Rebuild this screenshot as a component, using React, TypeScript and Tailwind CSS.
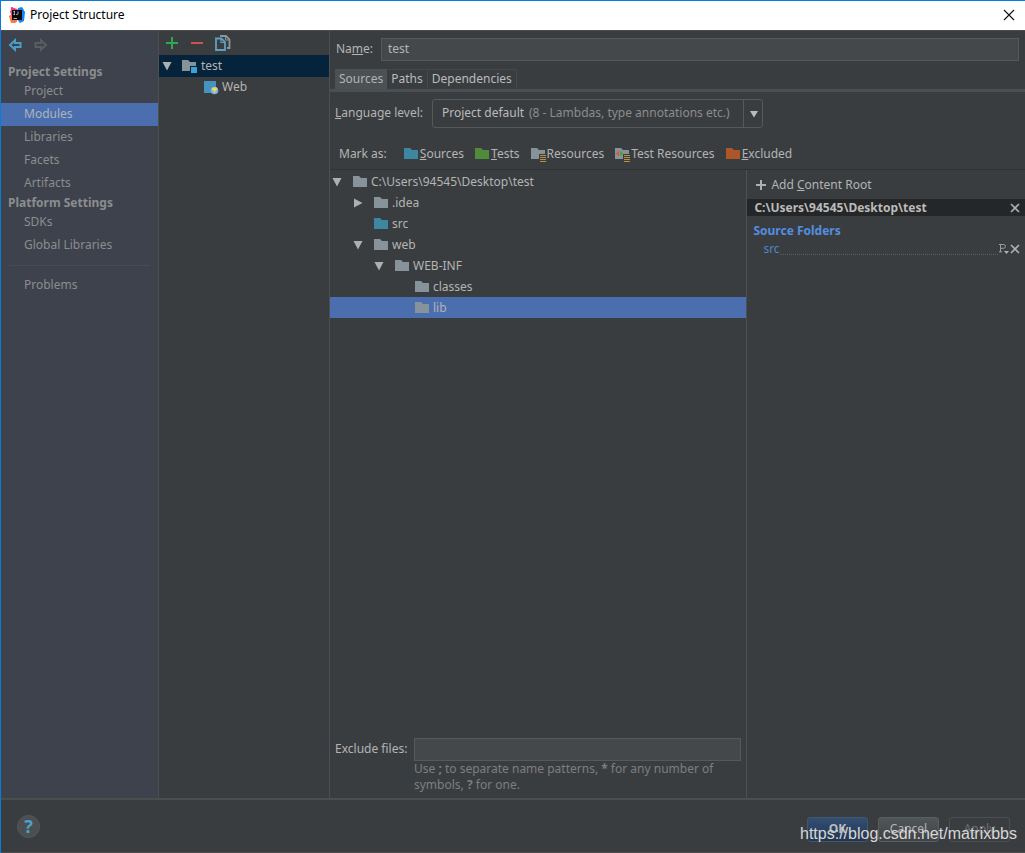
import type { ReactNode } from "react";

type FolderKind = "plain" | "source" | "test" | "excluded" | "resource" | "testResource" | "module";

type TreeItem = {
  name: string;
  kind: FolderKind;
  arrow?: "open" | "closed";
  indent: string;
  selected?: boolean;
};

const projectSettings = ["Project", "Modules", "Libraries", "Facets", "Artifacts"];
const platformSettings = ["SDKs", "Global Libraries"];

const contentTree: TreeItem[] = [
  { name: "C:\\Users\\94545\\Desktop\\test", kind: "plain", arrow: "open", indent: "pl-px" },
  { name: ".idea", kind: "plain", arrow: "closed", indent: "pl-[22px]" },
  { name: "src", kind: "source", indent: "pl-[22px]" },
  { name: "web", kind: "plain", arrow: "open", indent: "pl-[22px]" },
  { name: "WEB-INF", kind: "plain", arrow: "open", indent: "pl-[43px]" },
  { name: "classes", kind: "plain", indent: "pl-[63px]" },
  { name: "lib", kind: "plain", indent: "pl-[63px]", selected: true },
];

const folderColors: Record<FolderKind, string> = {
  plain: "#87939a",
  source: "#3d87a3",
  test: "#4f8b3b",
  excluded: "#ad5729",
  resource: "#87939a",
  testResource: "#87939a",
  module: "#87939a",
};

function FolderIcon({ kind }: { kind: FolderKind }) {
  const hasBars = kind === "resource" || kind === "testResource";
  return (
    <svg width="16" height="16" viewBox="0 0 16 16" className="shrink-0" aria-hidden="true">
      {hasBars || kind === "module" ? (
        <path d="M1 2h6l2 2h6v4H9v5H1z" fill={folderColors[kind]} />
      ) : (
        <path d="M1 2h6l2 2h6v9H1z" fill={folderColors[kind]} />
      )}
      {hasBars && <path d="M10 9.500h6M10 11.500h6M10 13.500h6M10 15.500h6" stroke="#b8913f" />}
      {kind === "testResource" && (
        <>
          <path d="M5 4.500v6L2 7.500z" fill="#e0542f" />
          <path d="M6 4.500v6l3-3z" fill="#3fa63b" />
        </>
      )}
      {kind === "module" && <path d="M10 9h6v6h-6z" fill="#3aa3cf" />}
    </svg>
  );
}

function TreeArrow({ state }: { state?: "open" | "closed" }) {
  return (
    <svg width="12" height="12" viewBox="0 0 12 12" className="shrink-0" aria-hidden="true">
      {state === "open" && <path d="M1.500 2h9l-4.500 8.500z" fill="#adafb0" />}
      {state === "closed" && <path d="M2 1.500v9l8.500-4.500z" fill="#adafb0" />}
    </svg>
  );
}

function CloseIcon() {
  return (
    <svg width="10" height="10" viewBox="0 0 10 10" aria-hidden="true">
      <path d="M1 1l8 8M9 1L1 9" stroke="#adafb0" strokeWidth="1.6" />
    </svg>
  );
}

function AppLogo() {
  return (
    <svg width="16" height="16" viewBox="0 0 16 16" aria-hidden="true">
      <path d="M2 0l6 2 3 7-5 7-4-1z" fill="#f5315e" />
      <path d="M0 9l6-4 2 10-6 1z" fill="#f97a3d" />
      <path d="M1 5l2-5 6 4-6 5z" fill="#e8418c" />
      <path d="M9 1l4-1 3 5-1 9-4 2-4-5z" fill="#1283f0" />
      <path d="M3 3h10v10H3z" fill="#0b0b0d" />
      <path d="M4.500 4.500h1.500M5.300 4.500v3M4.500 7.500h1.500M9 4.500v2.200q0 .8-1 .8H7.200M4.500 11.500H8" stroke="#ddd" strokeWidth=".8" fill="none" />
    </svg>
  );
}

function WebIcon() {
  return (
    <svg width="16" height="16" viewBox="0 0 16 16" className="shrink-0" aria-hidden="true">
      <path d="M1 2h12v12H1z" fill="#4593bf" />
      <circle cx="11.500" cy="11.500" r="3.800" fill="#7cb3d4" />
      <path d="M9 9.200q2-1.600 4.400-.6l1 1.600-1.800 1.600-.6 2.200-1.200-.6-.2-1.800-1.800-.6z" fill="#f2d464" />
    </svg>
  );
}

function SidebarItem({ children, selected }: { children: ReactNode; selected?: boolean }) {
  return (
    <li>
      <a
        href="#"
        className={`flex h-[23px] items-center pb-0.5 pl-[23px] ${selected ? "bg-[#4b6eaf] text-[#aeb3ba]" : ""}`}
      >
        {children}
      </a>
    </li>
  );
}

function MarkButton({ kind, children }: { kind: FolderKind; children: ReactNode }) {
  return (
    <button type="button" className="flex items-center gap-px">
      <FolderIcon kind={kind} />
      <span>{children}</span>
    </button>
  );
}

export default function App() {
  return (
    <div className="relative flex min-h-screen flex-col border-t border-l border-[#0a7cd8] bg-[#3a3d3f] font-['Noto_Sans','Open_Sans',sans-serif] text-xs leading-4 text-[#b4b4b4]">
      <header className="flex h-[29px] shrink-0 items-center bg-white pr-[10px] pb-0.5 pl-2 text-black">
        <AppLogo />
        <h1 className="ml-[5px] flex-1">Project Structure</h1>
        <button type="button" aria-label="Close">
          <svg width="12" height="12" viewBox="0 0 12 12" aria-hidden="true">
            <path d="M1 1l10 10M11 1L1 11" stroke="#111" strokeWidth="1.1" />
          </svg>
        </button>
      </header>

      <div className="flex flex-1 border-t border-[#4a4d4f]">
        {/* settings categories */}
        <nav className="w-[158px] shrink-0 border-r border-[#4d4f51] bg-[#3e424c] text-[#8b8d8f]">
          <div className="flex h-8 items-center gap-3 pb-1 pl-[7px]">
            <button type="button" aria-label="Back">
              <svg width="14" height="14" viewBox="0 0 14 14" aria-hidden="true">
                <path d="M2 7l5-4.600V5h5.500v4H7v2.600z" fill="none" stroke="#4a9cc9" strokeWidth="2" />
              </svg>
            </button>
            <button type="button" aria-label="Forward" disabled>
              <svg width="14" height="14" viewBox="0 0 14 14" aria-hidden="true">
                <path d="M12 7L7 2.400V5H1.500v4H7v2.600z" fill="none" stroke="#5b5c5e" strokeWidth="2" />
              </svg>
            </button>
          </div>
          <h2 className="pl-[7px] leading-[17px] font-bold">Project Settings</h2>
          <ul>
            {projectSettings.map((name) => (
              <SidebarItem key={name} selected={name === "Modules"}>{name}</SidebarItem>
            ))}
          </ul>
          <h2 className="pl-[7px] leading-4 font-bold">Platform Settings</h2>
          <ul>
            {platformSettings.map((name) => (
              <SidebarItem key={name}>{name}</SidebarItem>
            ))}
          </ul>
          <hr className="mx-2 my-2 border-[#484b53]" />
          <ul>
            <SidebarItem>Problems</SidebarItem>
          </ul>
        </nav>

        {/* module list */}
        <aside className="w-[171px] shrink-0 border-r border-[#4d4f51]">
          <div className="flex h-6 items-center gap-[11px] pl-1.5">
            <button type="button" aria-label="Add">
              <svg width="14" height="14" viewBox="0 0 14 14" aria-hidden="true">
                <path d="M7 1v12M1 7h12" stroke="#2fa84f" strokeWidth="2" />
              </svg>
            </button>
            <button type="button" aria-label="Remove">
              <svg width="14" height="14" viewBox="0 0 14 14" aria-hidden="true">
                <path d="M1 7h12" stroke="#c75450" strokeWidth="2" />
              </svg>
            </button>
            <button type="button" aria-label="Copy">
              <svg width="16" height="16" viewBox="0 0 16 16" aria-hidden="true">
                <path d="M5 1h6l3.500 3.500V13H12" fill="none" stroke="#8b959b" strokeWidth="1.800" />
                <path d="M10.500 1v4h4" fill="none" stroke="#8b959b" />
                <path d="M1 3.500h5.400l3.600 3.600V15H1z" fill="#3a3d3f" stroke="#5f9fc4" strokeWidth="1.800" />
                <path d="M6 4v3.500h4" fill="none" stroke="#5f9fc4" strokeWidth="1.200" />
              </svg>
            </button>
          </div>
          <ul>
            <li className="flex h-[22px] items-center bg-[#05233a] pl-0.5">
              <TreeArrow state="open" />
              <span className="ml-2"><FolderIcon kind="module" /></span>
              <span className="ml-1">test</span>
            </li>
            <li className="flex h-[22px] items-center pb-0.5 pl-11">
              <WebIcon />
              <span className="ml-[3px]">Web</span>
            </li>
          </ul>
        </aside>

        {/* module editor */}
        <main className="flex min-w-0 flex-1 flex-col">
          <div className="flex items-center px-1.5 pt-[7px]">
            <label htmlFor="module-name" className="w-[45px] pb-0.5">Na<u>m</u>e:</label>
            <input
              id="module-name"
              defaultValue="test"
              className="h-[23px] min-w-0 flex-1 border border-[#55595a] bg-[#45484a] px-1.5 pb-0.5 outline-none"
            />
          </div>

          <div role="tablist" className="mt-2 flex h-5 pl-[5px]">
            <button type="button" role="tab" aria-selected="true" className="bg-[#4c5153] px-1">Sources</button>
            <button type="button" role="tab" aria-selected="false" className="border-t border-r border-[#454849] px-1 pb-0.5 text-[#bbb]">Paths</button>
            <button type="button" role="tab" aria-selected="false" className="border-t border-r border-[#454849] px-1 pb-0.5 text-[#bbb]">Dependencies</button>
          </div>
          <div className="h-[3px] bg-[#4b4f51]" />

          <div className="flex items-center pt-[7px] pl-[5px]">
            <label htmlFor="language-level" className="w-[97px] pb-0.5"><u>L</u>anguage level:</label>
            <div className="relative w-[331px]">
              <select
                id="language-level"
                className="block h-[29px] w-full appearance-none rounded-[3px] border border-[#55595a] bg-transparent pb-0.5 pl-[9px] text-[#bbb] outline-none"
              >
                <option>Project default</option>
              </select>
              <span className="pointer-events-none absolute inset-y-0 left-[97px] flex items-center pb-0.5 text-[#8c8c8c]">
                (8 - Lambdas, type annotations etc.)
              </span>
              <span className="pointer-events-none absolute inset-y-0 right-0 flex w-5 items-center justify-center border-l border-[#55595a]">
                <svg width="10" height="8" viewBox="0 0 10 8" aria-hidden="true">
                  <path d="M1 1h8L5 7.500z" fill="#bbb" />
                </svg>
              </span>
            </div>
          </div>

          <div className="flex h-[42px] items-center gap-[10px] border-b border-[#2f3132] pt-2.5 pl-[9px]">
            <span className="mr-1.5">Mark as:</span>
            <MarkButton kind="source"><u>S</u>ources</MarkButton>
            <MarkButton kind="test"><u>T</u>ests</MarkButton>
            <MarkButton kind="resource">Resources</MarkButton>
            <MarkButton kind="testResource">Test Resources</MarkButton>
            <MarkButton kind="excluded"><u>E</u>xcluded</MarkButton>
          </div>

          <div className="flex flex-1">
            <section className="flex min-w-0 flex-[3_1_0%] flex-col border-r border-[#4d4f51]">
              <ul className="flex-1 pt-px">
                {contentTree.map((item) => (
                  <li
                    key={item.name}
                    className={`flex h-[21px] items-center ${item.indent} ${item.selected ? "bg-[#4b6eaf]" : ""}`}
                  >
                    <TreeArrow state={item.arrow} />
                    <span className="mr-[3px] ml-[9px]"><FolderIcon kind={item.kind} /></span>
                    <span>{item.name}</span>
                  </li>
                ))}
              </ul>
              <div className="grid grid-cols-[79px_1fr] items-center pr-[5px] pb-[5px] pl-[5px]">
                <label htmlFor="exclude-files" className="pb-0.5">Exclude files:</label>
                <input
                  id="exclude-files"
                  className="h-[23px] w-full border border-[#55595a] bg-[#45484a] px-1.5 outline-none"
                />
                <p className="col-start-2 text-[#7d7e7f]">
                  Use <b>;</b> to separate name patterns, <b>*</b> for any number of symbols, <b>?</b> for one.
                </p>
              </div>
            </section>

            <section className="min-w-0 flex-[2_1_0%]">
              <button type="button" className="flex h-[29px] items-center gap-1 pl-2">
                <svg width="12" height="12" viewBox="0 0 12 12" aria-hidden="true">
                  <path d="M6 1v10M1 6h10" stroke="#adafb0" strokeWidth="2" />
                </svg>
                <span>Add <u>C</u>ontent Root</span>
              </button>
              <div className="flex h-[17px] items-center bg-[#242627] pr-[5px] pl-[7px] font-bold text-[#bbb]">
                <span className="flex-1">C:\Users\94545\Desktop\test</span>
                <button type="button" aria-label="Remove content root"><CloseIcon /></button>
              </div>
              <h3 className="mt-[7px] pl-1.5 font-bold text-[#548ee0]">Source Folders</h3>
              <div className="mt-0.5 flex h-4 items-center pr-[5px] pl-4">
                <a href="#" className="text-[#4f84cc]">src</a>
                <span className="h-3 flex-1 border-b border-dotted border-[#5a5d5f]" />
                <button type="button" aria-label="Edit properties">
                  <svg width="12" height="12" viewBox="0 0 12 12" aria-hidden="true">
                    <path d="M2.500 9V1.500h2.800q2.200 0 2.200 1.900T5.300 5.300H2.500M1 1.500h2M1 8.800h3" stroke="#9a9c9d" fill="none" />
                    <path d="M6 8h5l-2.500 3z" fill="#adafb0" />
                  </svg>
                </button>
                <button type="button" aria-label="Remove source folder"><CloseIcon /></button>
              </div>
            </section>
          </div>
        </main>
      </div>

      <footer className="flex h-[55px] shrink-0 items-center border-t-2 border-b border-t-[#4b4d4e] border-b-[#4b4d4e] pr-[15px] pl-4">
        <button
          type="button"
          aria-label="Help"
          className="flex size-[23px] items-center justify-center rounded-full border border-[#55585a] bg-[#4b4f51] text-lg leading-none font-bold text-[#4f9fca]"
        >
          ?
        </button>
        <div className="ml-auto flex gap-[10px] pt-1.5">
          <button type="button" className="h-[25px] w-[61px] rounded-[3px] border border-[#41566f] bg-linear-to-b from-[#324f74] to-[#24364f] font-bold text-[#bbb]">OK</button>
          <button type="button" className="h-[25px] w-[61px] rounded-[3px] border border-[#5a5e60] bg-linear-to-b from-[#515658] to-[#3f4345]">Cancel</button>
          <button type="button" disabled className="h-[25px] w-[61px] rounded-[3px] border border-[#4d5052] text-[#6c6e70]">Apply</button>
        </div>
      </footer>

      <span className="pointer-events-none absolute right-2 bottom-2.5 font-['Liberation_Sans',sans-serif] text-base leading-[18px] text-[#d6d7d8]">
        https://blog.csdn.net/matrixbbs
      </span>
    </div>
  );
}
